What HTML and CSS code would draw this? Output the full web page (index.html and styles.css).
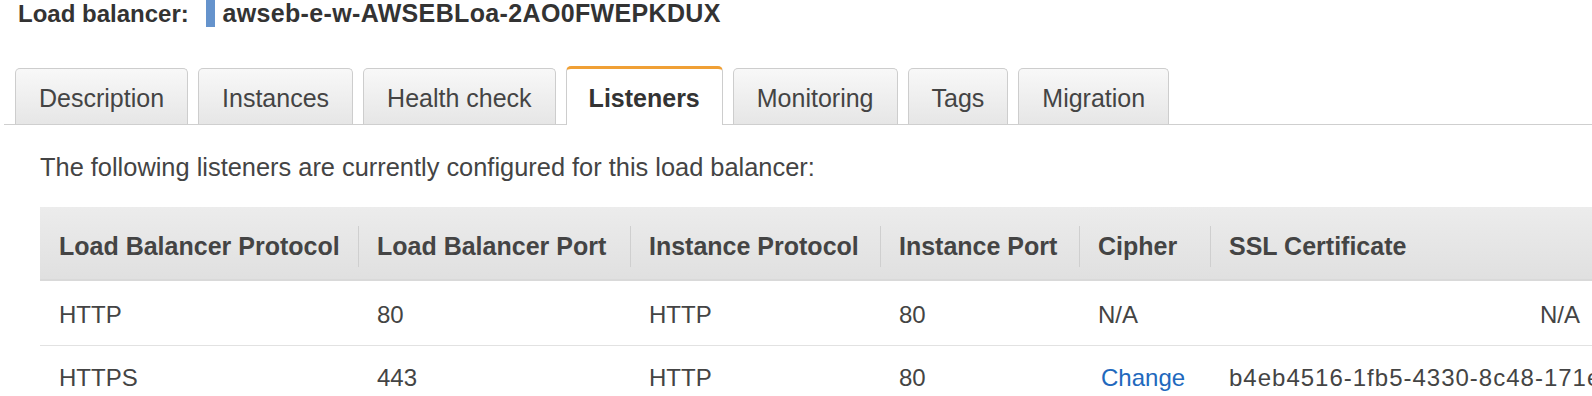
FILE: index.html
```html
<!DOCTYPE HTML><html>
<head>
  <title>Load balancer</title>
  <meta name="viewport" content="width=device-width, initial-scale=1">
  <link rel="stylesheet" href="styles.css">
</head>
<body>
  <h2 class="lb-title">Load balancer: <span class="lb-mark"></span><span class="lb-name">awseb-e-w-AWSEBLoa-2AO0FWEPKDUX</span></h2>
  <div class="tabs">
    <div class="tab">Description</div>
    <div class="tab">Instances</div>
    <div class="tab">Health check</div>
    <div class="tab active">Listeners</div>
    <div class="tab">Monitoring</div>
    <div class="tab">Tags</div>
    <div class="tab">Migration</div>
  </div>
  <p class="intro">The following listeners are currently configured for this load balancer:</p>
  <div class="table-wrap">
    <table class="listeners">
      <colgroup>
        <col class="c1"><col class="c2"><col class="c3"><col class="c4"><col class="c5"><col class="c6">
      </colgroup>
      <thead>
        <tr>
          <th>Load Balancer Protocol</th>
          <th>Load Balancer Port</th>
          <th>Instance Protocol</th>
          <th>Instance Port</th>
          <th>Cipher</th>
          <th>SSL Certificate</th>
        </tr>
      </thead>
      <tbody>
        <tr class="first">
          <td>HTTP</td>
          <td>80</td>
          <td>HTTP</td>
          <td>80</td>
          <td>N/A</td>
          <td class="center">N/A</td>
        </tr>
        <tr class="second">
          <td>HTTPS</td>
          <td>443</td>
          <td>HTTP</td>
          <td>80</td>
          <td><a href="#" class="link">Change</a></td>
          <td class="cert">b4eb4516-1fb5-4330-8c48-171e2a9d03c7</td>
        </tr>
      </tbody>
    </table>
  </div>
</body>
</html>
```

FILE: styles.css
```css
html {font-family: "Liberation Sans", Arial, sans-serif; color: #444;}
body {margin: 0; overflow: hidden;}

.lb-title {margin: 0 0 0 18px; font-size: 24px; line-height: 27px; color: #333; white-space: nowrap;}
.lb-mark {display: inline-block; width: 9px; height: 27px; background-color: #6593cc; vertical-align: top; margin: 0 7px 0 11px;}
.lb-name {font-size: 25px; letter-spacing: 0.35px;}

.tabs {display: flex; align-items: flex-end; margin: 41px 0 0 4px; border-bottom: 1px solid #cfcfcf; height: 56px;}
.tab {height: 51px; padding: 4px 23px 0 23px; margin-left: 10px; line-height: 51px; font-size: 25px; border: 1px solid #cdcdcd; border-bottom: none; border-radius: 5px 5px 0 0; background: linear-gradient(#f8f8f8, #e6e6e6); color: #444;}
.tab:first-child {margin-left: 11px;}
.tab.active {background: #fff; border-top: 3px solid #f0a035; font-weight: bold; height: 53px; line-height: 53px; margin-bottom: -1px; padding: 3px 22px 0 22px; color: #333;}

.intro {margin: 27px 0 0 40px; font-size: 25.4px; line-height: 30px; color: #444;}

.table-wrap {margin: 25px 0 0 40px; overflow: hidden;}
.listeners {border-collapse: collapse; table-layout: fixed; width: 1870px;}
.c1 {width: 318px;}
.c2 {width: 272px;}
.c3 {width: 250px;}
.c4 {width: 199px;}
.c5 {width: 131px;}
.c6 {width: 700px;}
.listeners th {position: relative; text-align: left; font-size: 25px; line-height: 28px; padding: 25px 10px 19px 19px; background: linear-gradient(#ececec, #e0e0e0); border-bottom: 2px solid #d9d9d9; color: #444; white-space: nowrap;}
.listeners th + th:before {content: ""; position: absolute; left: 0; top: 19px; bottom: 12px; width: 1px; background-color: #cfcfcf;}
.listeners td {font-size: 24px; line-height: 28px; padding: 20px 10px 16px 19px; border-bottom: 1px solid #e2e2e2; white-space: nowrap; color: #444;}
.listeners .second td {padding-top: 18px;}
.listeners td.center {text-align: center; padding-left: 0; padding-right: 0;}
.listeners td.cert {letter-spacing: 1px;}
.link {color: #2168bd; text-decoration: none; margin-left: 3px;}
```
